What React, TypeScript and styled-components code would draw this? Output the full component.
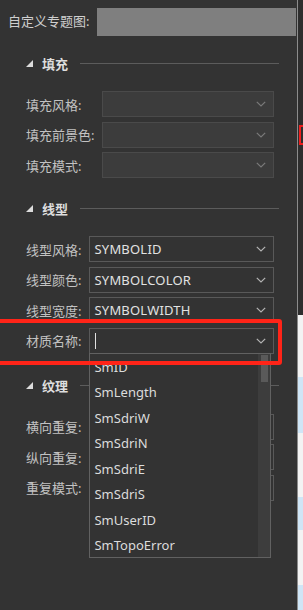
import React from 'react'
import styled, { createGlobalStyle } from 'styled-components'

const GlobalStyle = createGlobalStyle`
  html, body {
    margin: 0;
    padding: 0;
    background: #333333;
  }
`

const Page = styled.div`
  display: flex;
  width: 303px;
  height: 610px;
  overflow: hidden;
  background: #333333;
  font-family: "Noto Sans", "Noto Sans CJK SC", sans-serif;
  color: #c4c4c4;
`

const Panel = styled.div`
  width: 297px;
  flex: none;
  display: flex;
  flex-direction: column;
`

const Divider = styled.div`
  width: 1px;
  flex: none;
  background: #8c8c8c;
`

const SideStrip = styled.div`
  flex: 1;
  display: flex;
  flex-direction: column;
`

const SideDark = styled.div`
  height: 315px;
  padding-top: 125px;
  box-sizing: border-box;
  background: #2e2e2e;
`

const RedMark = styled.div`
  margin-left: 1px;
  height: 20px;
  box-sizing: border-box;
  border: 2px solid #f01e1e;
  border-right: none;
`

const SideLight = styled.div`
  flex: 1;
  display: flex;
  flex-direction: column;
  background: #f3f3f3;
`

const Band = styled.div<{ $gap: number; $h: number }>`
  margin-top: ${(p) => p.$gap}px;
  height: ${(p) => p.$h}px;
  background: #cfe5f6;
`

const TitleRow = styled.div`
  display: flex;
  align-items: center;
  margin-top: 8px;
  height: 28px;
  padding-left: 8px;
  font-size: 13px;
  color: #cfcfcf;
`

const TitleLabel = styled.span`
  margin-top: -4px;
`

const Redacted = styled.div`
  flex: 1;
  align-self: stretch;
  margin-left: 8px;
  margin-right: 1px;
  background: #7f7f7f;
`

const Section = styled.div<{ $top: number }>`
  margin-top: ${(p) => p.$top}px;
  padding: 0 23px 0 26px;
`

const Header = styled.div`
  display: flex;
  align-items: center;
  height: 20px;
  margin-right: -5px;
`

const Triangle = styled.div`
  width: 0;
  height: 0;
  border-left: 7px solid transparent;
  border-bottom: 7px solid #dcdcdc;
`

const HeaderText = styled.span`
  margin-left: 9px;
  font-size: 13px;
  font-weight: 700;
  color: #dedede;
`

const HeaderLine = styled.div`
  flex: 1;
  height: 1px;
  margin-left: 12px;
  background: #5c5c5c;
`

const Rows = styled.div`
  display: grid;
  grid-template-columns: auto 1fr;
  column-gap: 8px;
  row-gap: 4.5px;
  margin-top: 18px;
`

const Label = styled.span`
  align-self: center;
  font-size: 13px;
  color: #c2c2c2;
  white-space: nowrap;
`

const Select = styled.div<{ $disabled?: boolean }>`
  position: relative;
  display: flex;
  align-items: center;
  height: 26px;
  box-sizing: border-box;
  padding: 0 7px 0 4px;
  background: ${(p) => (p.$disabled ? '#3c3c3c' : '#333333')};
  border: 1px solid ${(p) => (p.$disabled ? '#4a4a4a' : '#595959')};
`

const Value = styled.span`
  flex: 1;
  font-size: 13px;
  color: #e2e2e2;
  letter-spacing: 0.2px;
`

const Caret = styled.div`
  width: 1px;
  height: 16px;
  background: #e0e0e0;
  margin-left: 1px;
`

const Spacer = styled.div`
  flex: 1;
`

const Chevron = styled.svg<{ $disabled?: boolean }>`
  flex: none;
  stroke: ${(p) => (p.$disabled ? '#7a7a7a' : '#b4b4b4')};
`

const DropList = styled.div`
  position: absolute;
  top: 100%;
  left: -1px;
  width: 182px;
  height: 205px;
  box-sizing: border-box;
  display: flex;
  background: #333333;
  border: 1px solid #616161;
  z-index: 2;
`

const Items = styled.div`
  flex: 1;
  display: flex;
  flex-direction: column;
  padding-top: 1px;
`

const Item = styled.div`
  height: 25.5px;
  line-height: 25.5px;
  padding-left: 4px;
  font-size: 13px;
  color: #dcdcdc;
`

const ScrollTrack = styled.div`
  width: 12px;
  flex: none;
  background: #3d3d3d;
  display: flex;
  justify-content: center;
  padding-top: 1px;
`

const ScrollThumb = styled.div`
  width: 7px;
  height: 27px;
  background: #5a5a5a;
`

const Annotation = styled.div`
  position: absolute;
  left: -100px;
  top: -10px;
  right: -9px;
  bottom: -12px;
  border: 4px solid #ff2418;
  border-radius: 3px;
  pointer-events: none;
  z-index: 3;
`

function Arrow({ disabled }: { disabled?: boolean }) {
  return (
    <Chevron $disabled={disabled} width="10" height="6" viewBox="0 0 10 6" fill="none" strokeWidth="1.2">
      <polyline points="0.8,0.8 5,5 9.2,0.8" />
    </Chevron>
  )
}

function Field({ label, value, disabled }: { label: string; value?: string; disabled?: boolean }) {
  return (
    <>
      <Label>{label}</Label>
      <Select $disabled={disabled}>
        {value ? <Value>{value}</Value> : <Spacer />}
        <Arrow disabled={disabled} />
      </Select>
    </>
  )
}

function SectionHeader({ title }: { title: string }) {
  return (
    <Header>
      <Triangle />
      <HeaderText>{title}</HeaderText>
      <HeaderLine />
    </Header>
  )
}

const fields = ['SmID', 'SmLength', 'SmSdriW', 'SmSdriN', 'SmSdriE', 'SmSdriS', 'SmUserID', 'SmTopoError']

export default function App(): JSX.Element {
  return (
    <Page>
      <GlobalStyle />
      <Panel>
        <TitleRow>
          <TitleLabel>自定义专题图:</TitleLabel>
          <Redacted />
        </TitleRow>

        <Section $top={17}>
          <SectionHeader title="填充" />
          <Rows>
            <Field label="填充风格:" disabled />
            <Field label="填充前景色:" disabled />
            <Field label="填充模式:" disabled />
          </Rows>
        </Section>

        <Section $top={20}>
          <SectionHeader title="线型" />
          <Rows>
            <Field label="线型风格:" value="SYMBOLID" />
            <Field label="线型颜色:" value="SYMBOLCOLOR" />
            <Field label="线型宽度:" value="SYMBOLWIDTH" />
            <Label>材质名称:</Label>
            <Select>
              <Caret />
              <Spacer />
              <Arrow />
              <DropList>
                <Items>
                  {fields.map((f) => (
                    <Item key={f}>{f}</Item>
                  ))}
                </Items>
                <ScrollTrack>
                  <ScrollThumb />
                </ScrollTrack>
              </DropList>
              <Annotation />
            </Select>
          </Rows>
        </Section>

        <Section $top={22}>
          <SectionHeader title="纹理" />
          <Rows>
            <Field label="横向重复:" />
            <Field label="纵向重复:" />
            <Field label="重复模式:" />
          </Rows>
        </Section>
      </Panel>
      <Divider />
      <SideStrip>
        <SideDark>
          <RedMark />
        </SideDark>
        <SideLight>
          <Band $gap={62} $h={56} />
          <Band $gap={64} $h={33} />
          <Band $gap={55} $h={25} />
        </SideLight>
      </SideStrip>
    </Page>
  )
}
